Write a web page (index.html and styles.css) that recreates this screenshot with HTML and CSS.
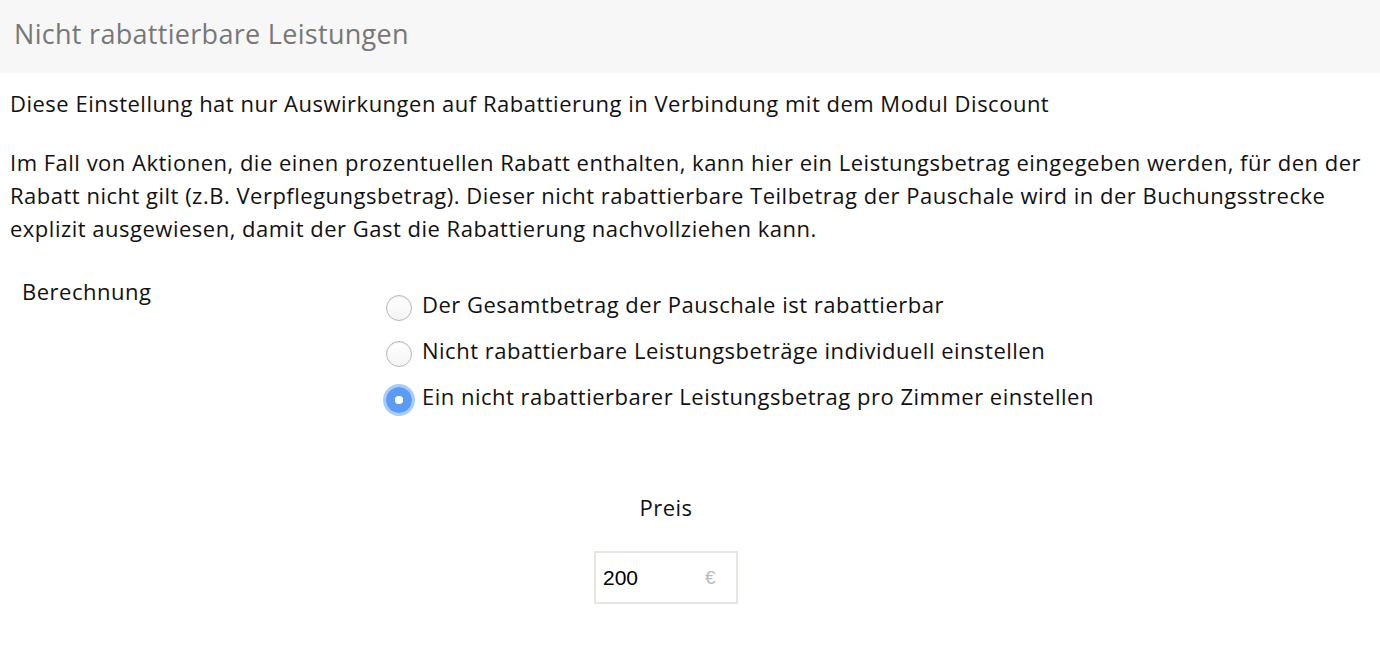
FILE: index.html
```html
<!DOCTYPE html>
<html lang="de">
<head>
    <meta charset="UTF-8">
    <meta name="viewport" content="width=device-width, initial-scale=1.0">
    <title>Nicht rabattierbare Leistungen</title>
    <link rel="stylesheet" href="styles.css">
</head>
<body>

    <div class="panel-head">
        <h2>Nicht rabattierbare Leistungen</h2>
    </div>

    <div class="panel-body">
        <p class="intro">Diese Einstellung hat nur Auswirkungen auf Rabattierung in Verbindung mit dem Modul Discount</p>
        <p class="info">Im Fall von Aktionen, die einen prozentuellen Rabatt enthalten, kann hier ein Leistungsbetrag eingegeben werden, für den der Rabatt nicht gilt (z.B. Verpflegungsbetrag). Dieser nicht rabattierbare Teilbetrag der Pauschale wird in der Buchungsstrecke explizit ausgewiesen, damit der Gast die Rabattierung nachvollziehen kann.</p>

        <div class="form-row">
            <div class="form-label">Berechnung</div>
            <div class="options">
                <label class="option">
                    <input type="radio" name="calc" value="all">
                    <span>Der Gesamtbetrag der Pauschale ist rabattierbar</span>
                </label>
                <label class="option">
                    <input type="radio" name="calc" value="single">
                    <span>Nicht rabattierbare Leistungsbeträge individuell einstellen</span>
                </label>
                <label class="option">
                    <input type="radio" name="calc" value="room" checked>
                    <span>Ein nicht rabattierbarer Leistungsbetrag pro Zimmer einstellen</span>
                </label>
            </div>
        </div>

        <div class="price">
            <div class="price-label">Preis</div>
            <div class="price-box">
                <input type="text" value="200">
                <span class="currency">€</span>
            </div>
        </div>
    </div>

</body>
</html>
```

FILE: styles.css
```css
body {
    margin: 0;
    font-family: "Open Sans", Lato, sans-serif;
    font-size: 22px;
    letter-spacing: 0.5px;
    color: #111;
    background-color: #fff;
}
.panel-head {
    background-color: #f7f7f7;
    height: 73px;
    box-sizing: border-box;
    padding: 0 0 6px 14px;
    display: flex;
    align-items: center;
}
.panel-head h2 {
    margin: 0;
    font-size: 27px;
    letter-spacing: 0.3px;
    font-weight: normal;
    color: #777;
}
.panel-body {
    padding: 0 10px;
}
.intro {
    margin: 13px 0 0;
    line-height: 34px;
}
.info {
    margin: 26px 0 0;
    line-height: 33px;
}
.form-row {
    display: flex;
    margin-top: 29px;
}
.form-label {
    width: 364px;
    padding-left: 12px;
    line-height: 34px;
}
.options {
    display: flex;
    flex-direction: column;
    gap: 12px;
    padding-top: 13px;
}
.option {
    display: flex;
    align-items: center;
    line-height: 34px;
}
.option input {
    appearance: none;
    -webkit-appearance: none;
    width: 26px;
    height: 26px;
    margin: 8px 10px 0 0;
    border-radius: 50%;
    border: 1px solid #b8b8b8;
    background: linear-gradient(#fff, #f4f4f4);
    box-shadow: inset 0 1px 1px rgba(0,0,0,0.08);
}
.option input:checked {
    border: none;
    background: radial-gradient(circle, #fff 0 4px, #5b9cf2 4.5px);
    box-shadow: 0 0 0 3px #a9cbf7;
}
.price {
    display: flex;
    flex-direction: column;
    align-items: center;
    margin-top: 77px;
    padding-right: 48px;
}
.price-label {
    line-height: 34px;
}
.price-box {
    display: flex;
    align-items: center;
    margin-top: 27px;
    width: 140px;
    height: 49px;
    border: 2px solid #e6e6e1;
    letter-spacing: 0;
}
.price-box input {
    width: 90px;
    border: none;
    outline: none;
    padding: 0 0 0 7px;
    font-family: "Liberation Sans", Arial, sans-serif;
    font-size: 21px;
    color: #000;
    background: transparent;
}
.currency {
    margin-left: 12px;
    font-family: "Liberation Sans", Arial, sans-serif;
    font-size: 19px;
    color: #bbb;
}
```
